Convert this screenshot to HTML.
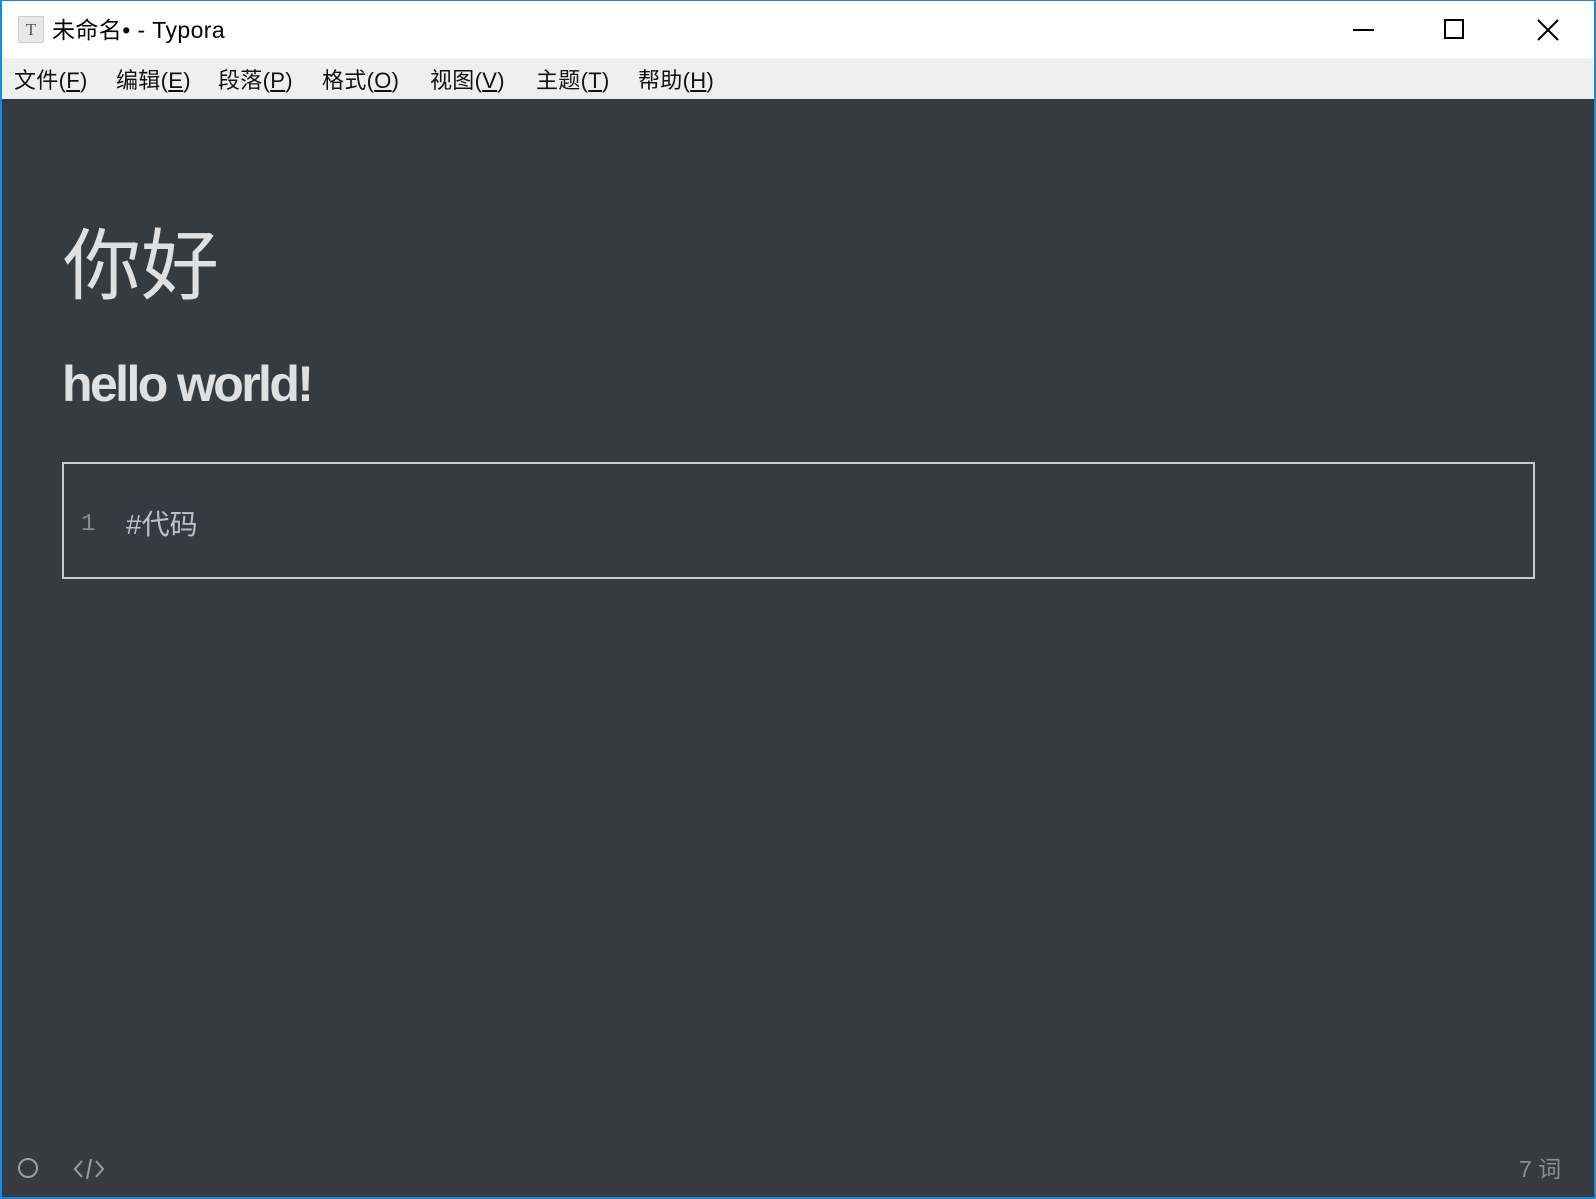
<!DOCTYPE html>
<html><head><meta charset="utf-8"><style>
*{margin:0;padding:0;box-sizing:border-box}
body{width:1596px;height:1199px;overflow:hidden;background:#1e88d8;position:relative;font-family:"Liberation Sans","Noto Sans CJK SC",sans-serif}
#win{position:absolute;left:2px;top:1px;width:1592px;height:1196px;background:#363b40}
#title{position:absolute;left:0;top:0;width:100%;height:57px;background:#fff}
#menu{position:absolute;left:0;top:57px;width:100%;height:41px;background:#efefef}
.m{position:absolute;top:5px;font-size:22px;color:#111;white-space:nowrap;letter-spacing:0.3px}
.abs{position:absolute}
</style></head><body>
<div id="win">
<div id="title">
  <div class="abs" style="left:16px;top:15px;width:26px;height:27px;background:#e8e8e8;border:1px solid #ccc;border-radius:2px;font-family:'Liberation Serif',serif;font-size:17px;color:#555;text-align:center;line-height:25px">T</div>
  <div class="abs" style="left:50px;top:10px;font-size:23px;color:#000;white-space:nowrap;letter-spacing:0.4px">未命名• - Typora</div>
  <div class="abs" style="left:1351px;top:28px;width:21px;height:2px;background:#000"></div>
  <div class="abs" style="left:1442px;top:18px;width:20px;height:20px;border:2px solid #000"></div>
  <svg class="abs" style="left:1535px;top:18px" width="22" height="22"><path d="M1 1L21 21M21 1L1 21" stroke="#000" stroke-width="2"/></svg>
</div>
<div id="menu">
  <div class="m" style="left:12px">文件(<u>F</u>)</div>
  <div class="m" style="left:114px">编辑(<u>E</u>)</div>
  <div class="m" style="left:216px">段落(<u>P</u>)</div>
  <div class="m" style="left:320px">格式(<u>O</u>)</div>
  <div class="m" style="left:428px">视图(<u>V</u>)</div>
  <div class="m" style="left:534px">主题(<u>T</u>)</div>
  <div class="m" style="left:636px">帮助(<u>H</u>)</div>
</div>
<div class="abs" style="left:61px;top:217px;font-size:78px;color:#e0e0e0;line-height:96px;white-space:nowrap">你好</div>
<div class="abs" style="left:60px;top:353px;font-size:50px;font-weight:bold;letter-spacing:-2.6px;color:#e0e0e0;line-height:60px;white-space:nowrap">hello world!</div>
<div class="abs" style="left:60px;top:461px;width:1473px;height:117px;border:2px solid #c8ccd0"></div>
<div class="abs" style="left:79px;top:510px;font-family:'Liberation Mono',monospace;font-size:24px;color:#8a8a8a">1</div>
<div class="abs" style="left:124px;top:502px;font-size:28px;color:#b8c2cc;white-space:nowrap">#代码</div>
<svg class="abs" style="left:14px;top:1155px" width="24" height="24"><circle cx="12" cy="12" r="9" fill="none" stroke="#9a9ea3" stroke-width="2"/></svg>
<svg class="abs" style="left:70px;top:1155px" width="34" height="26"><path d="M10 5L3 13L10 21M24 5L31 13L24 21M19 3L15 23" fill="none" stroke="#9a9ea3" stroke-width="2"/></svg>
<div class="abs" style="left:1517px;top:1149px;font-size:23px;color:#8a8f95;white-space:nowrap">7 词</div>
</div>
</body></html>
